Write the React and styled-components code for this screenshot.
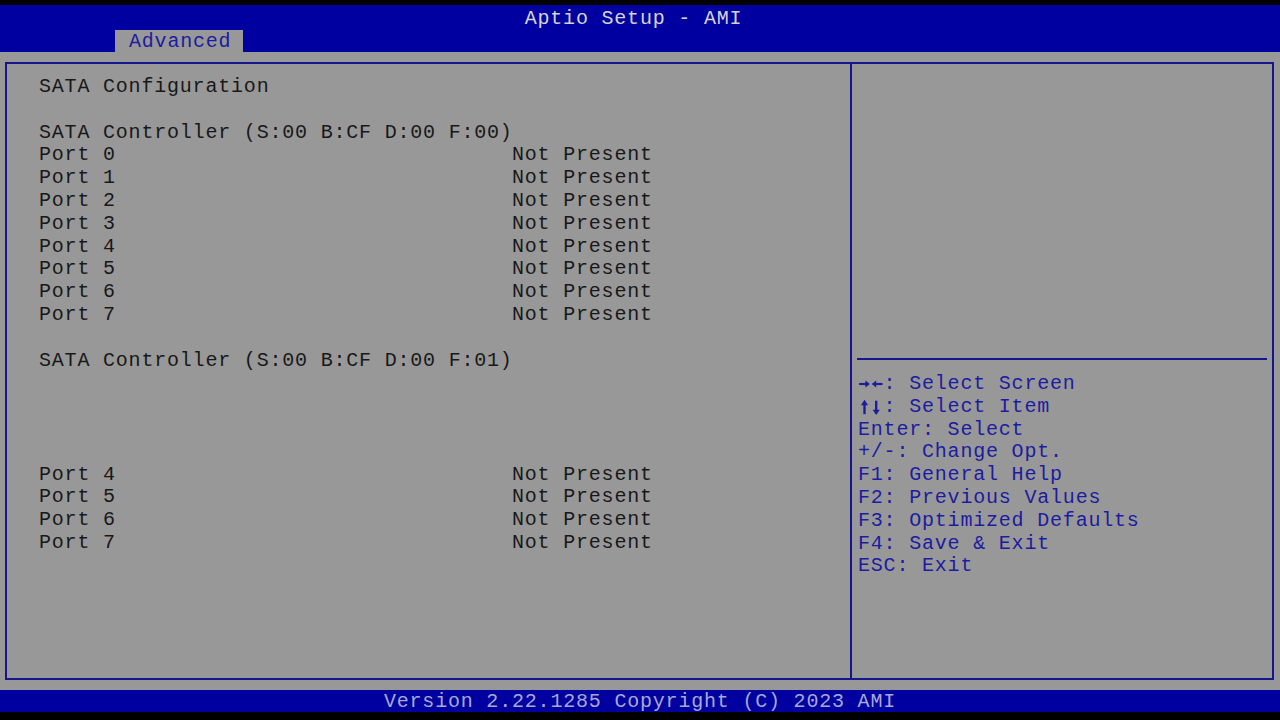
import React from 'react'
import styled, {createGlobalStyle} from 'styled-components'

const colors = {
  gray: '#989898',
  blue: '#0000a0',
  border: '#16168c',
  text: '#181818',
  help: '#1c1ca0',
  light: '#d4d4d4',
  footer: '#a8a8d4',
}

const ports = [0, 1, 2, 3, 4, 5, 6, 7]
const lowerPorts = [4, 5, 6, 7]

const rows = [
  {label: 'SATA Configuration'},
  {},
  {label: 'SATA Controller (S:00 B:CF D:00 F:00)'},
  ...ports.map(p => ({label: `Port ${p}`, value: 'Not Present'})),
  {},
  {label: 'SATA Controller (S:00 B:CF D:00 F:01)'},
  {},
  {},
  {},
  {},
  ...lowerPorts.map(p => ({label: `Port ${p}`, value: 'Not Present'})),
]

const help = [
  ['lr', ': Select Screen'],
  ['ud', ': Select Item'],
  ['', 'Enter: Select'],
  ['', '+/-: Change Opt.'],
  ['', 'F1: General Help'],
  ['', 'F2: Previous Values'],
  ['', 'F3: Optimized Defaults'],
  ['', 'F4: Save & Exit'],
  ['', 'ESC: Exit'],
]

function Arrows({kind}) {
  if (kind === 'lr') {
    return (
      <ArrowIcon viewBox="0 0 26 20" aria-label="→←">
        <path d="M0 10h8" stroke="currentColor" strokeWidth="2.4" />
        <path d="M7 6l5 4-5 4z" fill="currentColor" />
        <path d="M26 10h-8" stroke="currentColor" strokeWidth="2.4" />
        <path d="M19 6l-5 4 5 4z" fill="currentColor" />
      </ArrowIcon>
    )
  }
  return (
    <ArrowIcon viewBox="0 0 26 20" aria-label="↑↓">
      <path d="M6 18V6" stroke="currentColor" strokeWidth="2.6" />
      <path d="M2 8l4-6 4 6z" fill="currentColor" />
      <path d="M19 3v11" stroke="currentColor" strokeWidth="2.6" />
      <path d="M15 13l4 6 4-6z" fill="currentColor" />
    </ArrowIcon>
  )
}

export default function App() {
  return (
    <>
      <GlobalStyle />
      <Screen>
        <TopStrip />
        <Header>
          <Title>Aptio Setup - AMI</Title>
          <TabRow>
            <Tab>Advanced</Tab>
          </TabRow>
        </Header>
        <Body>
          <Panel>
            <Main>
              {rows.map((row, i) => (
                <Row key={i}>
                  <Label>{row.label || '\u00a0'}</Label>
                  <Value>{row.value}</Value>
                </Row>
              ))}
            </Main>
            <Side>
              <HelpArea />
              <Separator />
              <Keys>
                {help.map(([glyph, text], i) => (
                  <KeyLine key={i}>
                    {glyph && <Arrows kind={glyph} />}
                    {text}
                  </KeyLine>
                ))}
              </Keys>
            </Side>
          </Panel>
        </Body>
        <Footer>Version 2.22.1285 Copyright (C) 2023 AMI</Footer>
        <BottomStrip />
      </Screen>
    </>
  )
}

const GlobalStyle = createGlobalStyle`
  html, body {
    margin: 0;
    padding: 0;
    background: #000;
  }
  body {
    font-family: "Liberation Mono", "DejaVu Sans Mono", monospace;
    font-size: 20px;
    letter-spacing: 0.8px;
  }
`
const Screen = styled.div`
  width: 1280px;
  height: 720px;
  display: flex;
  flex-direction: column;
  background: #000;
  overflow: hidden;
`
const TopStrip = styled.div`
  height: 5px;
  background: #000;
`
const BottomStrip = styled.div`
  height: 8px;
  background: #000;
`
const Header = styled.header`
  height: 47px;
  background: ${colors.blue};
  display: flex;
  flex-direction: column;
`
const Title = styled.div`
  height: 25px;
  line-height: 25px;
  padding-top: 1px;
  box-sizing: border-box;
  color: ${colors.light};
  text-align: center;
  padding-right: 13px;
`
const TabRow = styled.div`
  display: flex;
  padding-left: 115px;
`
const Tab = styled.div`
  width: 128px;
  height: 22px;
  line-height: 22px;
  padding: 1px 0 0 14px;
  box-sizing: border-box;
  background: ${colors.gray};
  color: ${colors.help};
`
const Body = styled.main`
  flex: 1;
  background: ${colors.gray};
  padding: 10px 6px 10px 5px;
  display: flex;
`
const Panel = styled.section`
  flex: 1;
  border: 2px solid ${colors.border};
  display: flex;
`
const Main = styled.div`
  width: 845px;
  border-right: 2px solid ${colors.border};
  padding: 12px 0 0 32px;
  box-sizing: border-box;
  color: ${colors.text};
`
const Row = styled.div`
  display: grid;
  grid-template-columns: 473px auto;
  height: 22.8px;
  line-height: 22.8px;
  white-space: pre;
`
const Label = styled.span``
const Value = styled.span``
const Side = styled.aside`
  flex: 1;
  display: flex;
  flex-direction: column;
  color: ${colors.help};
`
const HelpArea = styled.div`
  height: 294px;
`
const Separator = styled.div`
  height: 2px;
  margin: 0 5px;
  background: ${colors.border};
`
const Keys = styled.div`
  padding: 13px 0 0 6px;
`
const KeyLine = styled.div`
  height: 22.8px;
  line-height: 22.8px;
  white-space: pre;
  display: flex;
  align-items: center;
`
const ArrowIcon = styled.svg`
  width: 25.6px;
  height: 18px;
  flex: none;
`
const Footer = styled.footer`
  height: 22px;
  line-height: 22px;
  padding-top: 1px;
  box-sizing: border-box;
  background: ${colors.blue};
  color: ${colors.footer};
  text-align: center;
`
